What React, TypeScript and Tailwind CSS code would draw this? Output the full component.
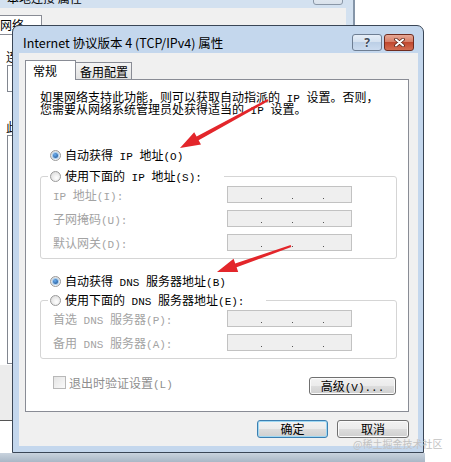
import React from "react";

const sim = "font-['Noto_Sans_CJK_SC',sans-serif]";
const yh = "font-['Noto_Sans_CJK_SC','Noto_Sans',sans-serif]";

// SimSun-like run: CJK at 12px, ASCII in a narrow monospace so each char is ~half width
function Mix({ text }: { text: string }) {
  const parts = text.split(/([\x20-\x7e]+)/).filter((p) => p !== "");
  return (
    <>
      {parts.map((p, i) =>
        /[\x20-\x7e]/.test(p) ? (
          <span key={i} className="whitespace-pre font-['Liberation_Mono',monospace] text-[11px] leading-[0]">
            {p}
          </span>
        ) : (
          <span key={i}>{p}</span>
        )
      )}
    </>
  );
}

function Radio({ checked }: { checked?: boolean }) {
  return (
    <span className="flex h-[11px] w-[11px] shrink-0 items-center justify-center rounded-full border border-[#9a9a9a] bg-[radial-gradient(circle_at_60%_65%,#ffffff,#d6d6d6)]">
      {checked && (
        <span className="h-[5px] w-[5px] rounded-full bg-[radial-gradient(circle_at_40%_35%,#6aaef0,#174a88)] ring-1 ring-[#a6ccef]" />
      )}
    </span>
  );
}

function RadioRow({ checked, label }: { checked?: boolean; label: string }) {
  return (
    <div className={`flex h-[14px] items-center gap-[4px] text-[12px] leading-[14px] text-black ${sim}`}>
      <Radio checked={checked} />
      <span className="whitespace-pre">
        <Mix text={label} />
      </span>
    </div>
  );
}

function IpBox() {
  return (
    <div className="flex h-[17px] w-[125px] items-end border border-[#c2c2c2] bg-[#efefef] pb-[3px] pl-[33px]">
      <span className="h-[1px] w-[1px] bg-[#555]" />
      <span className="ml-[30px] h-[1px] w-[1px] bg-[#555]" />
      <span className="ml-[30px] h-[1px] w-[1px] bg-[#555]" />
    </div>
  );
}

function Field({ label }: { label: string }) {
  return (
    <div className="flex items-center">
      <span className={`w-[174px] whitespace-pre text-[12px] leading-[14px] text-[#a3a3a3] ${sim}`}>
        <Mix text={label} />
      </span>
      <IpBox />
    </div>
  );
}

function Group({ legend, fields }: { legend: string; fields: string[] }) {
  return (
    <fieldset className="ml-[14px] w-[357px] rounded-[3px] border border-[#d5d5d5] pb-[7px] pl-[12px]">
      <legend className="-ml-[5px] bg-white pl-[2px] pr-[22px]">
        <RadioRow label={legend} />
      </legend>
      <div className="flex flex-col gap-[7px] pt-[3px]">
        {fields.map((f) => (
          <Field key={f} label={f} />
        ))}
      </div>
    </fieldset>
  );
}

function Button({ children, primary, className }: { children: React.ReactNode; primary?: boolean; className: string }) {
  return (
    <div
      className={`flex items-center justify-center rounded-[3px] border text-[12px] leading-[14px] text-black bg-[linear-gradient(#f2f2f2,#ebebeb_50%,#dddddd_50%,#cfcfcf)] ${
        primary ? "border-[#3c7fb1] shadow-[inset_0_0_0_1px_#9fd8f3]" : "border-[#707070] shadow-[inset_0_0_0_1px_#fbfbfb]"
      } ${className}`}
    >
      {children}
    </div>
  );
}

function BackWindow() {
  return (
    <div className="absolute left-0 top-[-22px] flex h-[484px] w-[355px] flex-col border-r-2 border-[#8595a8] bg-[#d3e1f0] pr-[7px]">
      <div className="flex h-[30px] items-start">
        <span className={`pl-[7px] pt-[13px] text-[12px] leading-[14px] text-black ${yh}`}>本地连接 属性</span>
        <span className="ml-auto mr-[3px] mt-[10px] h-[17px] w-[30px] rounded-[3px] border border-[#8a97a7] bg-[linear-gradient(#eef2f7,#d9e2ec)]" />
      </div>
      <div className="flex flex-1 flex-col bg-[#f0f0f0] pt-[7px]">
        <div className={`-ml-[8px] h-[19px] w-[50px] border border-b-0 border-[#898c95] bg-white pl-[7px] text-[12px] leading-[17px] ${yh}`}>网络</div>
        <div className="flex flex-1 flex-col border-t border-[#898c95] bg-white pl-[6px] pt-[15px]">
          <span className={`text-[12px] leading-[14px] ${sim}`}>连接时使用:</span>
          <div className="ml-[1px] mt-[1px] h-[27px] w-[320px] border border-[#828790] bg-white" />
          <span className={`mt-[28px] text-[12px] leading-[14px] ${sim}`}>此连接使用下列项目:</span>
          <div className="ml-[1px] mt-[1px] h-[229px] w-[320px] border border-[#828790] bg-white" />
          <div className="-ml-[6px] mt-[1px] h-[56px] border-b border-[#555] bg-[#ececec]" />
        </div>
      </div>
    </div>
  );
}

function Dialog() {
  return (
    <div className="absolute left-[12px] top-[25px] flex h-[428px] w-[412px] flex-col rounded-t-[7px] border border-[#3a4656] bg-[#c4d7ed] pb-[6px] pl-[6px] pr-[5px]">
      <div className="h-[27px] pt-[8px]">
        <div className="flex h-[17px] items-center">
          <span className={`pl-[4px] text-[12.5px] leading-[14px] text-black ${yh}`}>Internet 协议版本 4 (TCP/IPv4) 属性</span>
          <div className="ml-auto mr-[4px] flex gap-[2px]">
            <div className="flex h-[17px] w-[30px] items-center justify-center rounded-[3px] border border-[#6e7e93] bg-[linear-gradient(#e6eef8,#d3e0ef_50%,#bccfe6_50%,#cbdbef)]">
              <span className="text-[12px] font-bold leading-[12px] text-[#3f4b5a] [text-shadow:0_0_2px_#fff]">?</span>
            </div>
            <div className="flex h-[17px] w-[30px] items-center justify-center rounded-[3px] border border-[#6f2c20] bg-[linear-gradient(#e7a896,#d57a63_50%,#c0482f_50%,#d36d52)]">
              <svg width="11" height="9" viewBox="0 0 11 9">
                <path d="M2 1.5 L9 7.5 M9 1.5 L2 7.5" stroke="#5a2419" strokeWidth="3.6" strokeLinecap="round" />
                <path d="M2 1.5 L9 7.5 M9 1.5 L2 7.5" stroke="#ffffff" strokeWidth="2" strokeLinecap="round" />
              </svg>
            </div>
          </div>
        </div>
      </div>
      <div className="flex flex-1 flex-col bg-[#f0f0f0] pl-[6px] pt-[7px]">
        <div className="flex h-[20px] items-end">
          <div className={`relative z-10 h-[20px] w-[51px] border border-b-0 border-[#898c95] bg-white pl-[7px] text-[12px] leading-[19px] text-black ${yh}`}>常规</div>
          <div className={`mb-px h-[17px] w-[56px] border border-b-0 border-l-0 border-[#898c95] bg-[linear-gradient(#f4f4f4,#e2e2e2)] pl-[4px] text-[12px] leading-[17px] text-black ${yh}`}>备用配置</div>
        </div>
        <div className="-mt-px flex h-[333px] w-[384px] flex-col border border-[#898c95] bg-white">
          <div className={`pl-[14px] pt-[11px] text-[12px] leading-[12px] text-black ${sim}`}>
            <div className="whitespace-pre">
              <Mix text="如果网络支持此功能，则可以获取自动指派的 IP 设置。否则，" />
            </div>
            <div className="whitespace-pre">
              <Mix text="您需要从网络系统管理员处获得适当的 IP 设置。" />
            </div>
          </div>
          <div className="mt-[33px] pl-[24px]">
            <RadioRow checked label="自动获得 IP 地址(O)" />
          </div>
          <div className="mt-[7px]">
            <Group legend="使用下面的 IP 地址(S):" fields={["IP 地址(I):", "子网掩码(U):", "默认网关(D):"]} />
          </div>
          <div className="mt-[15px] pl-[24px]">
            <RadioRow checked label="自动获得 DNS 服务器地址(B)" />
          </div>
          <div className="mt-[5px]">
            <Group legend="使用下面的 DNS 服务器地址(E):" fields={["首选 DNS 服务器(P):", "备用 DNS 服务器(A):"]} />
          </div>
          <div className="mt-[17px] flex items-start justify-between pl-[27px] pr-[12px]">
            <div className="flex h-[13px] items-center gap-[3px]">
              <span className="h-[13px] w-[13px] border border-[#b8b8b8] bg-[linear-gradient(135deg,#e4e4e4,#fafafa)]" />
              <span className={`whitespace-pre text-[12px] leading-[14px] text-[#8e8e8e] ${sim}`}>
                <Mix text="退出时验证设置(L)" />
              </span>
            </div>
            <Button className={`mt-[1px] h-[18px] w-[87px] ${sim}`}>
              <span className="whitespace-pre">
                <Mix text="高级(V)..." />
              </span>
            </Button>
          </div>
        </div>
        <div className="mt-[8px] flex w-[384px] justify-end gap-[9px]">
          <Button primary className={`h-[18px] w-[71px] ${yh}`}>确定</Button>
          <Button className={`h-[18px] w-[72px] ${yh}`}>取消</Button>
        </div>
      </div>
    </div>
  );
}

function Arrows() {
  return (
    <svg className="pointer-events-none absolute left-0 top-0" width="451" height="462" viewBox="0 0 451 462">
      <polygon
        fill="#e3262b"
        points="268.5,100.9 198.6,140.2 201,144.5 180,148 194.2,132.3 196.6,136.6 267.5,99.1"
      />
      <polygon
        fill="#e3262b"
        points="291.3,246.9 236.6,267.3 238.2,272 217,272 233.6,258.8 235.2,263.5 290.7,245.1"
      />
    </svg>
  );
}

export default function App() {
  return (
    <div className="relative h-[462px] w-[451px] overflow-hidden bg-white">
      <BackWindow />
      <div className="absolute left-0 top-[453px] h-[9px] w-[425px] bg-[linear-gradient(#c9d3de,#a9b7c6)]" />
      <Dialog />
      <Arrows />
      <span className={`absolute left-[353px] top-[438px] text-[10px] leading-[12px] text-[#c2c2c2] ${yh}`}>@稀土掘金技术社区</span>
    </div>
  );
}
